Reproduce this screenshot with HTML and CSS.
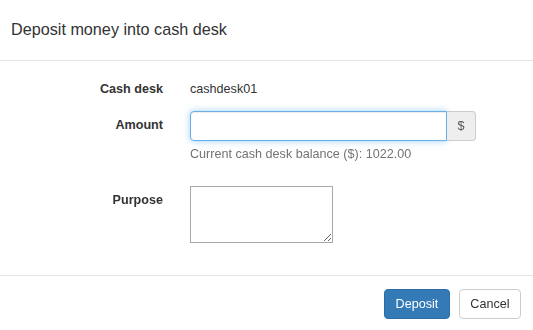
FILE: index.html
```html
<!DOCTYPE html>
<html lang="en">
<head>
    <meta charset="UTF-8">
    <title>Deposit money into cash desk</title>
    <link rel="stylesheet" href="styles.css">
</head>
<body>
    <div class="modal">
        <div class="modal-header">
            <h4 class="modal-title">Deposit money into cash desk</h4>
        </div>
        <form class="modal-body">
            <div class="form-row row-static">
                <label class="control-label">Cash desk</label>
                <div class="control static-value">cashdesk01</div>
            </div>
            <div class="form-row row-amount">
                <label class="control-label" for="amount">Amount</label>
                <div class="control">
                    <div class="input-group">
                        <input type="text" id="amount" class="form-control" autofocus>
                        <span class="input-addon">$</span>
                    </div>
                    <div class="help-block">Current cash desk balance ($): 1022.00</div>
                </div>
            </div>
            <div class="form-row">
                <label class="control-label" for="purpose">Purpose</label>
                <div class="control">
                    <textarea id="purpose" class="purpose"></textarea>
                </div>
            </div>
        </form>
        <div class="modal-footer">
            <button type="button" class="btn btn-primary">Deposit</button>
            <button type="button" class="btn btn-default">Cancel</button>
        </div>
    </div>
</body>
</html>
```

FILE: styles.css
```css
body {
    margin: 0;
    background-color: #fff;
    font-family: 'Liberation Sans', Arial, sans-serif;
    font-size: 12.6px;
    line-height: 18px;
    color: #333;
}
.modal {
    width: 533px;
    height: 330px;
    overflow: hidden;
}
.modal-header {
    padding: 18px 11px 19px;
    border-bottom: 1px solid #e5e5e5;
}
.modal-title {
    margin: 0;
    font-size: 16.2px;
    font-weight: normal;
    line-height: 23px;
}
.modal-body {
    margin: 0;
    padding: 14px 0 0;
    height: 215px;
    box-sizing: border-box;
    border-bottom: 1px solid #e5e5e5;
}
.form-row {
    display: grid;
    grid-template-columns: 163px 1fr;
    column-gap: 27px;
    margin-bottom: 23px;
}
.row-static {
    margin-bottom: 13px;
}
.control-label {
    text-align: right;
    font-weight: bold;
    padding-top: 5px;
}
.static-value {
    padding-top: 5px;
}
.input-group {
    display: flex;
    width: 286px;
}
.form-control {
    width: 257px;
    height: 30px;
    box-sizing: border-box;
    padding: 4px 11px;
    margin: 0;
    font: inherit;
    color: #555;
    border: 1px solid #66afe9;
    border-radius: 4px 0 0 4px;
    outline: 0;
    box-shadow: inset 0 1px 1px rgba(0, 0, 0, .075), 0 0 7px rgba(102, 175, 233, .6);
}
.input-addon {
    width: 29px;
    height: 30px;
    box-sizing: border-box;
    display: flex;
    align-items: center;
    justify-content: center;
    color: #555;
    background-color: #eee;
    border: 1px solid #ccc;
    border-left: 0;
    border-radius: 0 4px 4px 0;
}
.help-block {
    margin-top: 4px;
    color: #737373;
}
.purpose {
    display: block;
    width: 143px;
    height: 57px;
    box-sizing: border-box;
    margin: 0;
    border: 1px solid #a9a9a9;
    font: inherit;
}
.modal-footer {
    display: flex;
    justify-content: flex-end;
    gap: 9px;
    padding: 13px 12px 0;
}
.btn {
    height: 30px;
    padding: 4px 10.5px;
    box-sizing: border-box;
    font: inherit;
    border: 1px solid transparent;
    border-radius: 4px;
    cursor: pointer;
}
.btn-primary {
    color: #fff;
    background-color: #337ab7;
    border-color: #2e6da4;
}
.btn-default {
    color: #333;
    background-color: #fff;
    border-color: #ccc;
}
```
